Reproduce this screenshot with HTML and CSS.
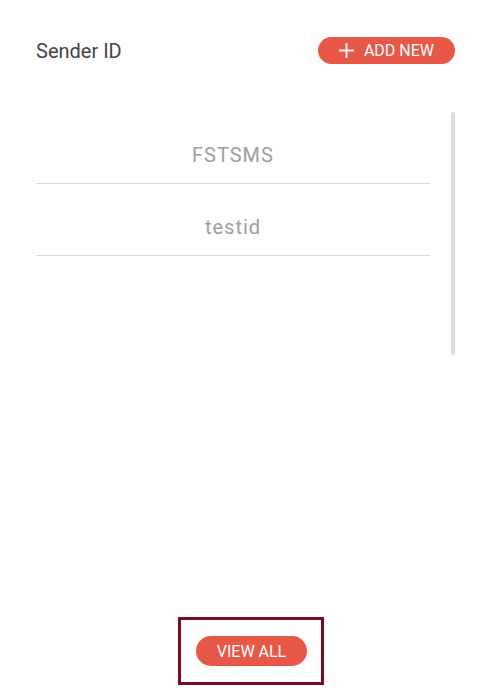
FILE: index.html
```html
<!DOCTYPE html>
<html lang="en">
  <head>
    <meta charset="UTF-8" />
    <meta name="viewport" content="width=device-width, initial-scale=1.0" />
    <title>Sender ID</title>
    <link rel="stylesheet" href="styles.css">
  </head>

  <body>
    <div class="card">
      <div class="card-header">
        <h2 class="card-title">Sender ID</h2>
        <button class="btn btn-add" type="button">
          <svg class="plus" width="15" height="15" viewBox="0 0 15 15">
            <path d="M7.5 0 V15 M0 7.5 H15" stroke="currentColor" stroke-width="2" fill="none" />
          </svg>
          ADD NEW
        </button>
      </div>

      <div class="list-wrap">
        <ul class="sender-list">
          <li>FSTSMS</li>
          <li>testid</li>
        </ul>
        <div class="scrollbar"></div>
      </div>

      <div class="card-footer">
        <div class="highlight">
          <button class="btn btn-view" type="button">VIEW ALL</button>
        </div>
      </div>
    </div>
  </body>
</html>
```

FILE: styles.css
```css
body {
  margin: 0;
  font-family: Roboto, "Liberation Sans", Arial, sans-serif;
  background-color: #fff;
}

.card {
  height: 696px;
  box-sizing: border-box;
  padding: 37px 40px 10px 36px;
  display: flex;
  flex-direction: column;
}

.card-header {
  display: flex;
  justify-content: space-between;
  align-items: center;
  height: 27px;
}

.card-title {
  margin: 0;
  font-size: 20px;
  font-weight: 400;
  color: #444;
}

.btn {
  border: none;
  background-color: #e85848;
  color: #fff;
  font-family: inherit;
  font-size: 16px;
  border-radius: 20px;
  cursor: pointer;
  display: flex;
  align-items: center;
}

.btn-add {
  height: 27px;
  padding: 0 21px;
  gap: 10px;
  margin-right: 1px;
}

.plus {
  color: rgba(255, 255, 255, 0.9);
}

.list-wrap {
  margin-top: 48px;
  display: flex;
  align-items: flex-start;
}

.sender-list {
  list-style-type: none;
  margin: 0 21px 0 0;
  padding: 0;
  flex: 1;
}

.sender-list li {
  padding: 32px 0 17px;
  line-height: 22px;
  font-size: 20px;
  letter-spacing: 1px;
  color: #9e9e9e;
  text-align: center;
  border-bottom: 1px solid #d9d9d9;
}

.scrollbar {
  width: 4px;
  height: 243px;
  border-radius: 2px;
  background-color: #ddd;
  margin-right: 1px;
}

.card-footer {
  margin-top: auto;
  display: flex;
  justify-content: center;
  padding-left: 10px;
}

.highlight {
  border: 3px solid #7a0b22;
  padding: 16px 14px 16px 15px;
  margin-bottom: 1px;
}

.btn-view {
  height: 30px;
  padding: 0 21px;
}
```
